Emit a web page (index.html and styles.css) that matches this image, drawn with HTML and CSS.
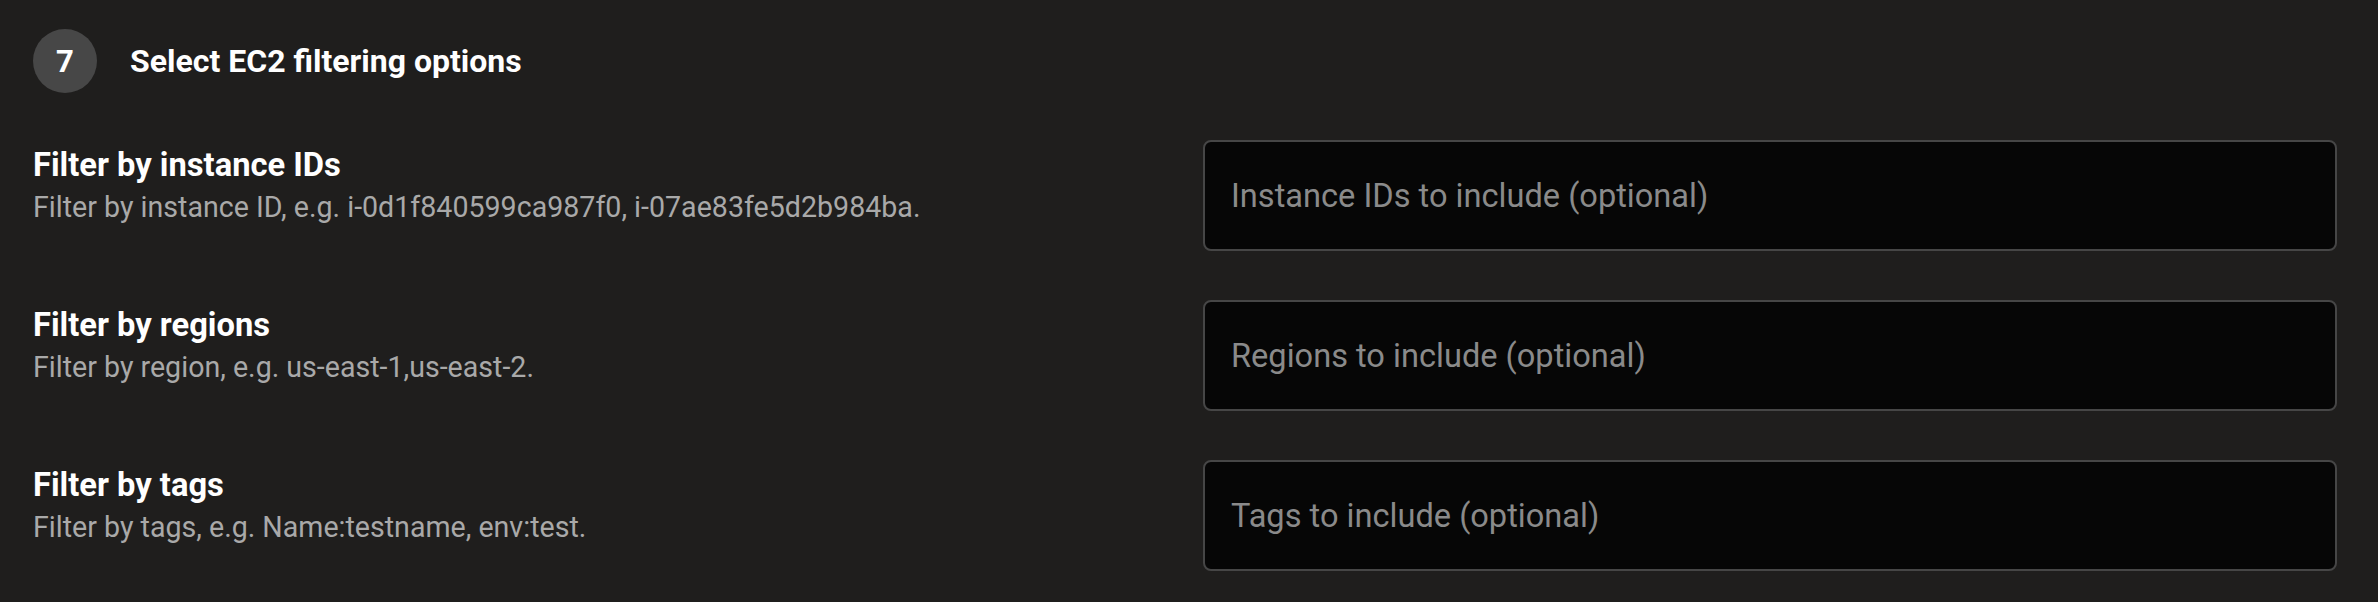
FILE: index.html
```html
<!DOCTYPE html>
<html>
<head>
<meta charset="utf-8">
<link rel="stylesheet" href="styles.css">
</head>
<body>
<div class="page">
  <div class="step-header">
    <div class="step-num">7</div>
    <div class="step-title">Select EC2 filtering options</div>
  </div>
  <div class="rows">
    <div class="row">
      <div class="label">
        <div class="label-title">Filter by instance IDs</div>
        <div class="label-desc">Filter by instance ID, e.g. i-0d1f840599ca987f0, i-07ae83fe5d2b984ba.</div>
      </div>
      <input class="field" type="text" placeholder="Instance IDs to include (optional)">
    </div>
    <div class="row">
      <div class="label">
        <div class="label-title">Filter by regions</div>
        <div class="label-desc">Filter by region, e.g. us-east-1,us-east-2.</div>
      </div>
      <input class="field" type="text" placeholder="Regions to include (optional)">
    </div>
    <div class="row">
      <div class="label">
        <div class="label-title">Filter by tags</div>
        <div class="label-desc">Filter by tags, e.g. Name:testname, env:test.</div>
      </div>
      <input class="field" type="text" placeholder="Tags to include (optional)">
    </div>
  </div>
</div>
</body>
</html>
```
FILE: styles.css
```css
html, body {
  margin: 0;
  padding: 0;
  background: #1f1e1d;
  font-family: Roboto, "Liberation Sans", sans-serif;
}
.page {
  padding: 29px 41px 0 33px;
}
.step-header {
  display: flex;
  align-items: center;
  gap: 33px;
  height: 64px;
}
.step-num {
  width: 64px;
  height: 64px;
  border-radius: 50%;
  background: #474747;
  color: #fff;
  font-size: 31px;
  font-weight: 700;
  display: flex;
  align-items: center;
  justify-content: center;
}
.step-title {
  color: #fff;
  font-size: 32px;
  font-weight: 700;
}
.rows {
  display: flex;
  flex-direction: column;
  gap: 49px;
  margin-top: 47px;
}
.row {
  display: flex;
  align-items: flex-start;
  justify-content: space-between;
  height: 111px;
}
.label {
  display: flex;
  flex-direction: column;
  padding-top: 4px;
}
.label-title {
  color: #fff;
  font-size: 32.7px;
  font-weight: 700;
  line-height: 42px;
}
.label-desc {
  color: #a9a9a9;
  font-size: 28.6px;
  line-height: 42px;
}
.field {
  box-sizing: border-box;
  width: 1134px;
  height: 111px;
  background: #060606;
  border: 2px solid #464646;
  border-radius: 8px;
  padding: 0 26px;
  font-family: Roboto, "Liberation Sans", sans-serif;
  font-size: 32.6px;
  color: #ddd;
  outline: none;
}
.field::placeholder {
  color: #8a8a8a;
}
```
